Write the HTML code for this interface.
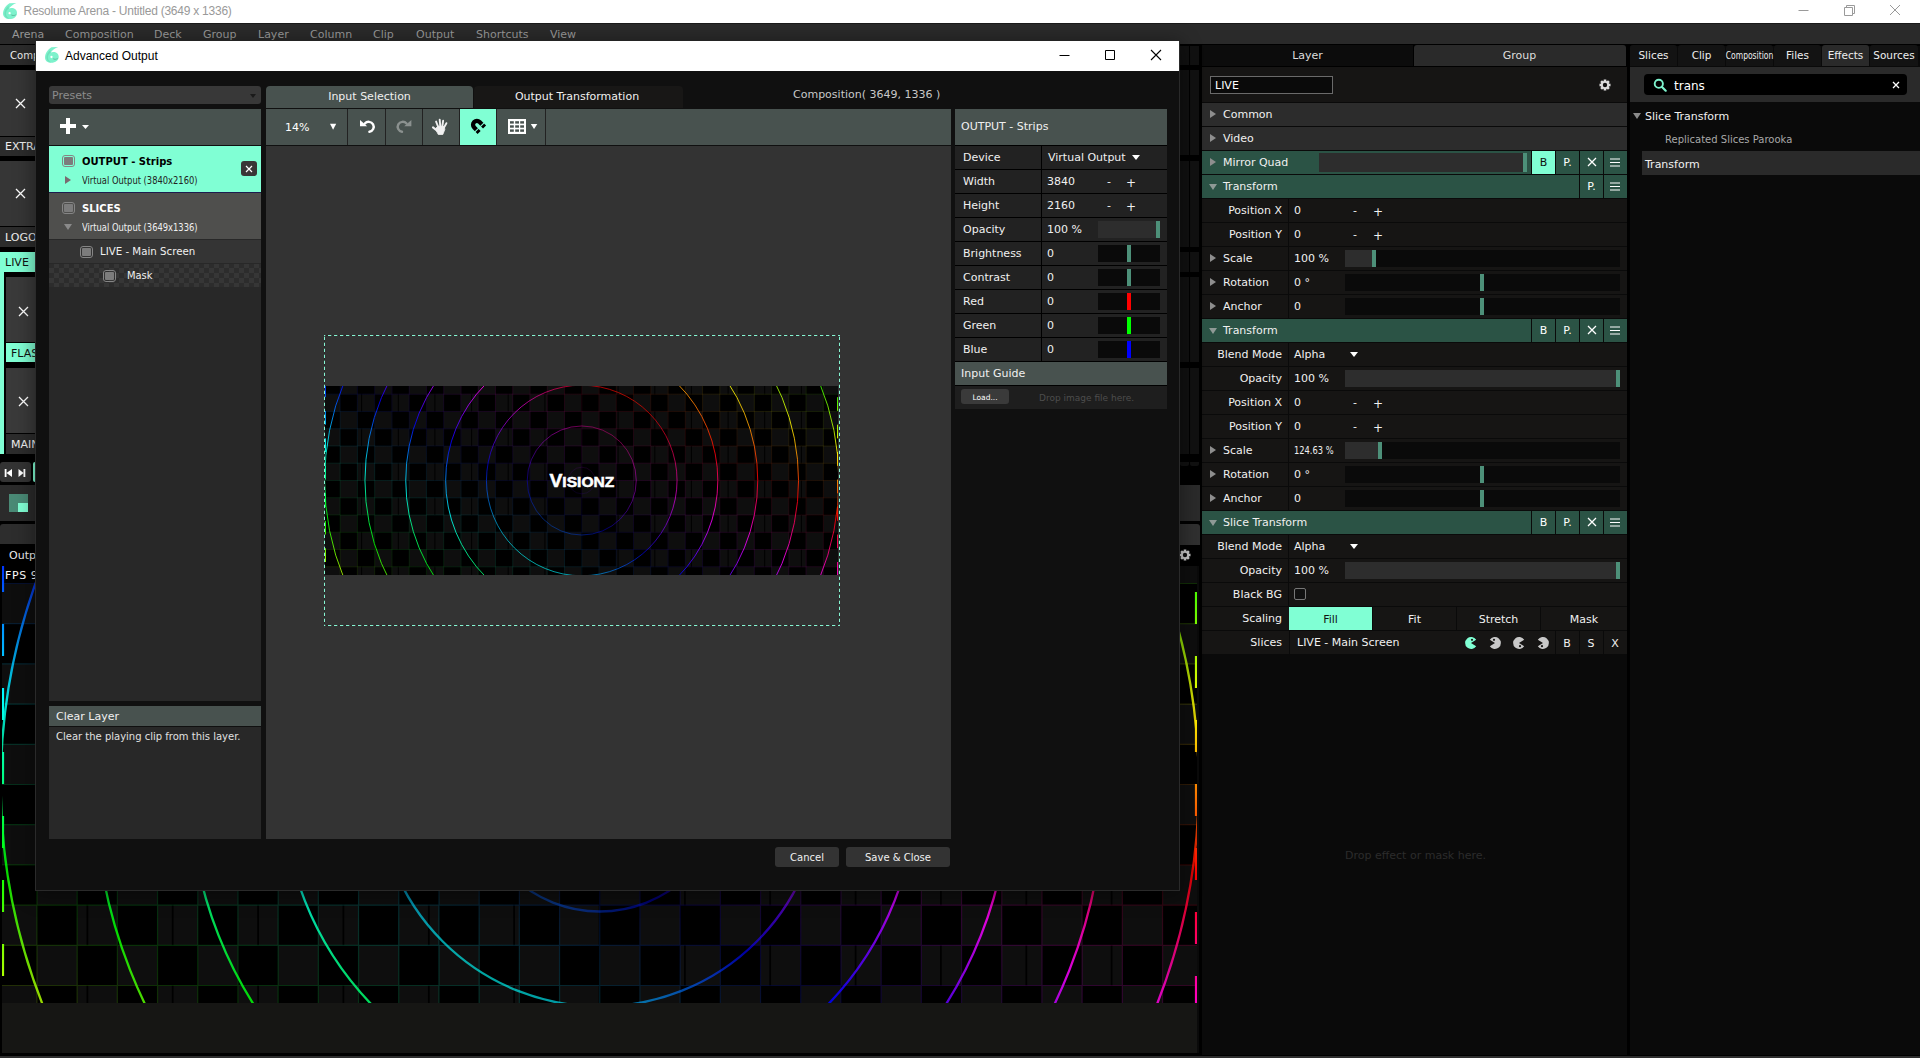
<!DOCTYPE html><html><head><meta charset="utf-8"><title>Resolume Arena - Advanced Output</title><style>
*{box-sizing:border-box;margin:0;padding:0}
html,body{width:1920px;height:1058px;overflow:hidden;background:#000}
body{position:relative;font-family:"DejaVu Sans","Liberation Sans",sans-serif;font-size:11px;color:#e8e8e8}
div,span,svg{position:absolute}
.t{white-space:nowrap;line-height:16px;height:16px}
.c{text-align:center}
.r{text-align:right}
.seg{font-family:"Liberation Sans",sans-serif}
</style></head><body>
<div style="left:0px;top:0px;width:1920px;height:23px;background:#fff;"></div>
<svg style="left:-0.20000000000000018px;top:-0.10000000000000009px" width="22" height="24" viewBox="0 0 22 24"><g transform="translate(0.20,0.10) scale(1.0)"><path d="M16.2 2.9L9.3 3.100C5.500 5.500 2.900 9.500 2.800 13.500C2.800 17 5.600 19 9.200 19C13.600 19 16.800 16.400 16.800 12.800C16.800 9.600 14.200 7.800 11 7.900C10.200 7.900 9.400 8.100 8.700 8.400C10.300 6.200 13 4.200 16.2 2.9Z" fill="#7df2cc"/><path d="M8.700 8.400C6.800 9.600 5.600 11.600 5.800 14C6 16.200 7.400 17.800 9.400 18.600C6.600 18.600 4.200 16.600 4.200 13.400C4.200 10.400 6 7.600 8.600 5.400C8.200 6.400 8.200 7.400 8.700 8.400Z" fill="#6fe0bb"/><path d="M10.800 14.300C12.600 15.100 14.800 14.900 16.300 13.900C15.800 15.300 14.500 16 13.100 16C12 16 11 15.400 10.800 14.300Z" fill="#62c4a5"/><circle cx="9.400" cy="13.100" r="1.150" fill="#fff"/></g></svg>
<span class="t seg" style="left:23.5px;top:3px;color:#999;font-size:12px;letter-spacing:-0.24px">Resolume Arena - Untitled (3649 x 1336)</span>
<svg style="left:1790px;top:-1px" width="130" height="23" viewBox="0 0 130 23"><path d="M8.5 11.5H18.5" stroke="#9a9a9a" stroke-width="1" fill="none"/><path d="M54.5 8.5H62.5V16.5H54.5Z M56.5 8.5V6.5H64.5V14.5H62.5" stroke="#9a9a9a" stroke-width="1" fill="none"/><path d="M100 6L110 16M110 6L100 16" stroke="#9a9a9a" stroke-width="1" fill="none"/></svg>
<div style="left:0px;top:23px;width:1920px;height:21px;background:#2a2a2a;border-top:1px solid #1a1a1a"></div>
<span class="t" style="left:12px;top:27px;color:#999;font-size:11px;">Arena</span>
<span class="t" style="left:65px;top:27px;color:#999;font-size:11px;">Composition</span>
<span class="t" style="left:154px;top:27px;color:#999;font-size:11px;">Deck</span>
<span class="t" style="left:203px;top:27px;color:#999;font-size:11px;">Group</span>
<span class="t" style="left:258px;top:27px;color:#999;font-size:11px;">Layer</span>
<span class="t" style="left:310px;top:27px;color:#999;font-size:11px;">Column</span>
<span class="t" style="left:373px;top:27px;color:#999;font-size:11px;">Clip</span>
<span class="t" style="left:416px;top:27px;color:#999;font-size:11px;">Output</span>
<span class="t" style="left:476px;top:27px;color:#999;font-size:11px;">Shortcuts</span>
<span class="t" style="left:550px;top:27px;color:#999;font-size:11px;">View</span>
<div style="left:0px;top:45px;width:40px;height:20px;background:#2c2c2c;"></div>
<span class="t" style="left:9.5px;top:48px;color:#eee;font-size:11px;transform:scaleX(0.92);transform-origin:0 50%">Comp</span>
<div style="left:0px;top:70px;width:40px;height:66px;background:#363636;"></div>
<svg style="left:14.5px;top:97.5px" width="11.0" height="11.0" viewBox="-5.5 -5.5 11.0 11.0"><path d="M-4.5 -4.5L4.5 4.5M4.5 -4.5L-4.5 4.5" stroke="#fff" stroke-width="1.3" fill="none"/></svg>
<div style="left:0px;top:137px;width:40px;height:19px;background:#2c2c2c;"></div>
<span class="t" style="left:5px;top:139px;color:#eee;font-size:11px;">EXTRA</span>
<div style="left:0px;top:161px;width:40px;height:65px;background:#363636;"></div>
<svg style="left:14.5px;top:187.5px" width="11.0" height="11.0" viewBox="-5.5 -5.5 11.0 11.0"><path d="M-4.5 -4.5L4.5 4.5M4.5 -4.5L-4.5 4.5" stroke="#fff" stroke-width="1.3" fill="none"/></svg>
<div style="left:0px;top:227px;width:40px;height:20px;background:#2c2c2c;"></div>
<span class="t" style="left:5px;top:230px;color:#eee;font-size:11px;">LOGO</span>
<div style="left:0px;top:252px;width:40px;height:20px;background:#80ffd4;"></div>
<span class="t" style="left:5px;top:255px;color:#111;font-size:11px;">LIVE</span>
<div style="left:0px;top:272px;width:4px;height:182px;background:#80ffd4;"></div>
<div style="left:6px;top:277px;width:34px;height:65px;background:#3a3a3a;"></div>
<svg style="left:17.5px;top:305.5px" width="11.0" height="11.0" viewBox="-5.5 -5.5 11.0 11.0"><path d="M-4.5 -4.5L4.5 4.5M4.5 -4.5L-4.5 4.5" stroke="#fff" stroke-width="1.3" fill="none"/></svg>
<div style="left:6px;top:343px;width:34px;height:19px;background:#80ffd4;"></div>
<span class="t" style="left:11px;top:346px;color:#111;font-size:11px;">FLASH</span>
<div style="left:6px;top:368px;width:34px;height:65px;background:#3a3a3a;"></div>
<svg style="left:17.5px;top:395.5px" width="11.0" height="11.0" viewBox="-5.5 -5.5 11.0 11.0"><path d="M-4.5 -4.5L4.5 4.5M4.5 -4.5L-4.5 4.5" stroke="#fff" stroke-width="1.3" fill="none"/></svg>
<div style="left:6px;top:434px;width:34px;height:20px;background:#2c2c2c;"></div>
<span class="t" style="left:11px;top:437px;color:#eee;font-size:11px;">MAIN</span>
<div style="left:0px;top:462px;width:31px;height:20px;background:#333;border-radius:3px"></div>
<svg style="left:3px;top:467px" width="26" height="12" viewBox="0 0 26 12"><path d="M1.700 2H3.500V10H1.700ZM9 2V10L3.500 6Z M20.500 2H22.300V10H20.500ZM15.500 2V10L20.500 6Z" fill="#fff"/></svg>
<div style="left:33px;top:462px;width:8px;height:20px;background:#80ffd4;border-radius:2px"></div>
<div style="left:0px;top:485px;width:40px;height:36px;background:#2b2b2b;"></div>
<div style="left:9px;top:494px;width:19px;height:18px;background:#4a8a76;"></div>
<div style="left:18px;top:503px;width:10px;height:9px;background:#80ffd4;"></div>
<div style="left:0px;top:524px;width:40px;height:20px;background:#2d2d2d;border-radius:3px 0 0 0"></div>
<div style="left:0px;top:545px;width:1200px;height:20px;background:#000;"></div>
<span class="t" style="left:9px;top:548px;color:#eee;font-size:11px;">Output</span>
<svg style="left:2px;top:566px" width="1195" height="437" viewBox="0 0 1195 437"><defs><linearGradient id="bg" gradientUnits="userSpaceOnUse" spreadMethod="repeat" x1="-83.63" y1="584.13" x2="346.46" y2="-172.52"><stop offset="0.0000" stop-color="#ff0000"/><stop offset="0.0833" stop-color="#ff8000"/><stop offset="0.1667" stop-color="#ffff00"/><stop offset="0.2500" stop-color="#80ff00"/><stop offset="0.3333" stop-color="#00ff00"/><stop offset="0.4167" stop-color="#00ff80"/><stop offset="0.5000" stop-color="#00ffff"/><stop offset="0.5833" stop-color="#0080ff"/><stop offset="0.6667" stop-color="#0000ff"/><stop offset="0.7500" stop-color="#8000ff"/><stop offset="0.8333" stop-color="#ff00ff"/><stop offset="0.9167" stop-color="#ff0080"/><stop offset="1.0000" stop-color="#ff0000"/></linearGradient><pattern id="bp" patternUnits="userSpaceOnUse" x="597.750" y="218.500" width="80.400" height="80.400"><rect width="80.400" height="80.400" fill="#000"/><rect width="40.200" height="40.200" fill="#0e0e0e"/><rect x="40.200" y="40.200" width="40.200" height="40.200" fill="#0e0e0e"/></pattern></defs><rect width="1195" height="437" fill="url(#bp)"/><path d="M85.4 0V437M170.7 0V437M256.1 0V437M341.4 0V437M426.8 0V437M512.1 0V437M597.5 0V437M682.9 0V437M768.2 0V437M853.6 0V437M938.9 0V437M1024.3 0V437M1109.6 0V437" stroke="#000" stroke-width="1.70" fill="none"/><path d="M34.95 0V437M75.15 0V437M115.35 0V437M155.55 0V437M195.75 0V437M235.95 0V437M276.15 0V437M316.35 0V437M356.55 0V437M396.75 0V437M436.95 0V437M477.15 0V437M517.35 0V437M557.55 0V437M597.75 0V437M637.95 0V437M678.15 0V437M718.35 0V437M758.55 0V437M798.75 0V437M838.95 0V437M879.15 0V437M919.35 0V437M959.55 0V437M999.75 0V437M1039.95 0V437M1080.15 0V437M1120.35 0V437M1160.55 0V437M0 17.50H1195M0 57.70H1195M0 97.90H1195M0 138.10H1195M0 178.30H1195M0 218.50H1195M0 258.70H1195M0 298.90H1195M0 339.10H1195M0 379.30H1195M0 419.50H1195" stroke="url(#bg)" stroke-width="1.20" fill="none" opacity="0.16"/><circle cx="597.75" cy="218.50" r="31.00" fill="none" stroke="url(#bg)" stroke-width="2.3" opacity="0.11"/><circle cx="597.75" cy="218.50" r="127.00" fill="none" stroke="url(#bg)" stroke-width="2.3" opacity="0.42"/><circle cx="597.75" cy="218.50" r="222.00" fill="none" stroke="url(#bg)" stroke-width="2.3" opacity="0.64"/><circle cx="597.75" cy="218.50" r="317.00" fill="none" stroke="url(#bg)" stroke-width="2.3" opacity="0.85"/><circle cx="597.75" cy="218.50" r="410.00" fill="none" stroke="url(#bg)" stroke-width="2.3" opacity="0.85"/><circle cx="597.75" cy="218.50" r="505.00" fill="none" stroke="url(#bg)" stroke-width="2.3" opacity="0.85"/><circle cx="597.75" cy="218.50" r="599.00" fill="none" stroke="url(#bg)" stroke-width="2.3" opacity="0.85"/><path d="M1.00 0.00V26.00M1.00 58.00V90.00M1.00 122.00V154.00M1.00 186.00V218.00M1.00 250.00V282.00M1.00 314.00V346.00M1.00 378.00V410.00M1194.00 26.00V58.00M1194.00 90.00V122.00M1194.00 154.00V186.00M1194.00 218.00V250.00M1194.00 282.00V314.00M1194.00 346.00V378.00M1194.00 410.00V437.00" stroke="url(#bg)" stroke-width="2.20" fill="none"/></svg>
<span class="t" style="left:5px;top:568px;color:#fff;font-size:11px;letter-spacing:0.6px">FPS 9</span>
<div style="left:2px;top:1003px;width:1195px;height:50px;background:#161614;"></div>
<div style="left:1197px;top:566px;width:2px;height:487px;background:#0a0a0a;"></div>
<div style="left:0px;top:1056px;width:1920px;height:2px;background:#2e2e2e;"></div>
<div style="left:1180px;top:46px;width:9px;height:420px;background:#111;border-radius:0 0 2px 2px"></div>
<div style="left:1190px;top:46px;width:9px;height:420px;background:#111;border-radius:0 0 2px 2px"></div>
<div style="left:1180px;top:65px;width:20px;height:5px;background:#000;"></div>
<div style="left:1180px;top:155px;width:20px;height:6px;background:#000;"></div>
<div style="left:1180px;top:247px;width:20px;height:5px;background:#000;"></div>
<div style="left:1180px;top:272px;width:20px;height:5px;background:#000;"></div>
<div style="left:1180px;top:362px;width:20px;height:6px;background:#000;"></div>
<div style="left:1180px;top:454px;width:20px;height:8px;background:#000;"></div>
<div style="left:1180px;top:466px;width:20px;height:20px;background:#000;"></div>
<div style="left:1180px;top:485px;width:20px;height:36px;background:#2b2b2b;"></div>
<div style="left:1180px;top:524px;width:20px;height:21px;background:#303030;border-radius:0 3px 0 0"></div>
<svg style="left:1178px;top:548px" width="14" height="14" viewBox="-7 -7 14 14"><rect x="-1.3" y="-5.5" width="2.6" height="11.0" transform="rotate(0)" fill="#ccc"/><rect x="-1.3" y="-5.5" width="2.6" height="11.0" transform="rotate(45)" fill="#ccc"/><rect x="-1.3" y="-5.5" width="2.6" height="11.0" transform="rotate(90)" fill="#ccc"/><rect x="-1.3" y="-5.5" width="2.6" height="11.0" transform="rotate(135)" fill="#ccc"/><circle r="4.1" fill="#ccc"/><circle r="2.2" fill="#111"/></svg>
<div style="left:1200px;top:44px;width:720px;height:1008px;background:#000;"></div>
<div style="left:1202px;top:45px;width:211px;height:21px;background:#0c0c0c;"></div>
<span class="t c" style="left:1202px;top:48px;color:#ddd;font-size:11px;width:211px">Layer</span>
<div style="left:1414px;top:45px;width:212px;height:21px;background:#2a2a2a;border-radius:3px 3px 0 0"></div>
<span class="t c" style="left:1414px;top:48px;color:#ddd;font-size:11px;width:211px">Group</span>
<div style="left:1202px;top:67px;width:425px;height:35px;background:#161514;"></div>
<div style="left:1210px;top:76px;width:123px;height:18px;background:#0a0a0a;border:1px solid #6a6a6a"></div>
<span class="t" style="left:1215px;top:78px;color:#fff;font-size:11px;">LIVE</span>
<svg style="left:1598px;top:78px" width="14" height="14" viewBox="-7 -7 14 14"><rect x="-1.3" y="-5.5" width="2.6" height="11.0" transform="rotate(0)" fill="#ddd"/><rect x="-1.3" y="-5.5" width="2.6" height="11.0" transform="rotate(45)" fill="#ddd"/><rect x="-1.3" y="-5.5" width="2.6" height="11.0" transform="rotate(90)" fill="#ddd"/><rect x="-1.3" y="-5.5" width="2.6" height="11.0" transform="rotate(135)" fill="#ddd"/><circle r="4.1" fill="#ddd"/><circle r="2.2" fill="#111"/></svg>
<div style="left:1202px;top:102px;width:425px;height:953px;background:#0a0a0a;"></div>
<div style="left:1202px;top:103px;width:425px;height:23px;background:#2c2c2c;"></div><svg style="left:1210px;top:110px" width="6" height="8" viewBox="0 0 6 8"><path d="M0 0L6 4.0L0 8Z" fill="#8e8e8e"/></svg><span class="t" style="left:1223px;top:107px;color:#f0f0f0;font-size:11px;">Common</span>
<div style="left:1202px;top:127px;width:425px;height:23px;background:#2c2c2c;"></div><svg style="left:1210px;top:134px" width="6" height="8" viewBox="0 0 6 8"><path d="M0 0L6 4.0L0 8Z" fill="#8e8e8e"/></svg><span class="t" style="left:1223px;top:131px;color:#f0f0f0;font-size:11px;">Video</span>
<div style="left:1202px;top:151px;width:329px;height:23px;background:#2b5345;"></div><svg style="left:1210px;top:158px" width="6" height="8" viewBox="0 0 6 8"><path d="M0 0L6 4.0L0 8Z" fill="#8e8e8e"/></svg><span class="t" style="left:1223px;top:155px;color:#f0f0f0;font-size:11px;">Mirror Quad</span><div style="left:1319px;top:153px;width:208px;height:19px;background:#2d2d2d;"></div><div style="left:1523px;top:153px;width:4px;height:19px;background:#4d9079;"></div><div style="left:1604px;top:151px;width:23px;height:23px;background:#2b5345;"></div><svg style="left:1610px;top:158px" width="10" height="9" viewBox="0 0 10 9"><path d="M0 1H10M0 4.5H10M0 8H10" stroke="#fff" stroke-width="1.2"/></svg><div style="left:1580px;top:151px;width:23px;height:23px;background:#2b5345;"></div><svg style="left:1586.5px;top:157px" width="10" height="10" viewBox="-5 -5 10 10"><path d="M-4 -4L4 4M4 -4L-4 4" stroke="#fff" stroke-width="1.3" fill="none"/></svg><div style="left:1556px;top:151px;width:23px;height:23px;background:#2b5345;"></div><span class="t c" style="left:1556px;top:154.5px;color:#fff;font-size:11px;width:23px">P.</span><div style="left:1532px;top:151px;width:23px;height:23px;background:#80ffd4;"></div><span class="t c" style="left:1532px;top:154.5px;color:#111;font-size:11px;width:23px">B</span>
<div style="left:1202px;top:175px;width:377px;height:23px;background:#2b5345;"></div><svg style="left:1209px;top:184px" width="8" height="6" viewBox="0 0 8 6"><path d="M0 0L8 0L4.0 6Z" fill="#8f9a96"/></svg><span class="t" style="left:1223px;top:179px;color:#f0f0f0;font-size:11px;">Transform</span><div style="left:1604px;top:175px;width:23px;height:23px;background:#2b5345;"></div><svg style="left:1610px;top:182px" width="10" height="9" viewBox="0 0 10 9"><path d="M0 1H10M0 4.5H10M0 8H10" stroke="#fff" stroke-width="1.2"/></svg><div style="left:1580px;top:175px;width:23px;height:23px;background:#2b5345;"></div><span class="t c" style="left:1580px;top:178.5px;color:#fff;font-size:11px;width:23px">P.</span>
<div style="left:1202px;top:199px;width:86px;height:23px;background:#161514;"></div><div style="left:1289px;top:199px;width:338px;height:23px;background:#161514;"></div><span class="t r" style="left:1202px;top:203px;color:#f0f0f0;font-size:11px;width:80px">Position X</span><span class="t" style="left:1294px;top:203px;color:#f0f0f0;font-size:11px;">0</span><span class="t" style="left:1353px;top:203px;color:#f0f0f0;font-size:11px;">-</span><span class="t" style="left:1373px;top:203.5px;color:#f0f0f0;font-size:12px;">+</span>
<div style="left:1202px;top:223px;width:86px;height:23px;background:#161514;"></div><div style="left:1289px;top:223px;width:338px;height:23px;background:#161514;"></div><span class="t r" style="left:1202px;top:227px;color:#f0f0f0;font-size:11px;width:80px">Position Y</span><span class="t" style="left:1294px;top:227px;color:#f0f0f0;font-size:11px;">0</span><span class="t" style="left:1353px;top:227px;color:#f0f0f0;font-size:11px;">-</span><span class="t" style="left:1373px;top:227.5px;color:#f0f0f0;font-size:12px;">+</span>
<div style="left:1202px;top:247px;width:86px;height:23px;background:#161514;"></div><div style="left:1289px;top:247px;width:338px;height:23px;background:#161514;"></div><svg style="left:1210px;top:254px" width="6" height="8" viewBox="0 0 6 8"><path d="M0 0L6 4.0L0 8Z" fill="#8e8e8e"/></svg><span class="t" style="left:1223px;top:251px;color:#f0f0f0;font-size:11px;">Scale</span><span class="t" style="left:1294px;top:251px;color:#f0f0f0;font-size:11px;">100 %</span><div style="left:1345px;top:250px;width:275px;height:17px;background:#0a0a0a;"></div><div style="left:1345px;top:250px;width:27px;height:17px;background:#2d2d2d;"></div><div style="left:1372px;top:250px;width:4px;height:17px;background:#4d9079;"></div>
<div style="left:1202px;top:271px;width:86px;height:23px;background:#161514;"></div><div style="left:1289px;top:271px;width:338px;height:23px;background:#161514;"></div><svg style="left:1210px;top:278px" width="6" height="8" viewBox="0 0 6 8"><path d="M0 0L6 4.0L0 8Z" fill="#8e8e8e"/></svg><span class="t" style="left:1223px;top:275px;color:#f0f0f0;font-size:11px;">Rotation</span><span class="t" style="left:1294px;top:275px;color:#f0f0f0;font-size:11px;">0 °</span><div style="left:1345px;top:274px;width:275px;height:17px;background:#0a0a0a;"></div><div style="left:1480px;top:274px;width:4px;height:17px;background:#4d9079;"></div>
<div style="left:1202px;top:295px;width:86px;height:23px;background:#161514;"></div><div style="left:1289px;top:295px;width:338px;height:23px;background:#161514;"></div><svg style="left:1210px;top:302px" width="6" height="8" viewBox="0 0 6 8"><path d="M0 0L6 4.0L0 8Z" fill="#8e8e8e"/></svg><span class="t" style="left:1223px;top:299px;color:#f0f0f0;font-size:11px;">Anchor</span><span class="t" style="left:1294px;top:299px;color:#f0f0f0;font-size:11px;">0</span><div style="left:1345px;top:298px;width:275px;height:17px;background:#0a0a0a;"></div><div style="left:1480px;top:298px;width:4px;height:17px;background:#4d9079;"></div>
<div style="left:1202px;top:319px;width:329px;height:23px;background:#2b5345;"></div><svg style="left:1209px;top:328px" width="8" height="6" viewBox="0 0 8 6"><path d="M0 0L8 0L4.0 6Z" fill="#8f9a96"/></svg><span class="t" style="left:1223px;top:323px;color:#f0f0f0;font-size:11px;">Transform</span><div style="left:1604px;top:319px;width:23px;height:23px;background:#2b5345;"></div><svg style="left:1610px;top:326px" width="10" height="9" viewBox="0 0 10 9"><path d="M0 1H10M0 4.5H10M0 8H10" stroke="#fff" stroke-width="1.2"/></svg><div style="left:1580px;top:319px;width:23px;height:23px;background:#2b5345;"></div><svg style="left:1586.5px;top:325px" width="10" height="10" viewBox="-5 -5 10 10"><path d="M-4 -4L4 4M4 -4L-4 4" stroke="#fff" stroke-width="1.3" fill="none"/></svg><div style="left:1556px;top:319px;width:23px;height:23px;background:#2b5345;"></div><span class="t c" style="left:1556px;top:322.5px;color:#fff;font-size:11px;width:23px">P.</span><div style="left:1532px;top:319px;width:23px;height:23px;background:#2b5345;"></div><span class="t c" style="left:1532px;top:322.5px;color:#fff;font-size:11px;width:23px">B</span>
<div style="left:1202px;top:343px;width:86px;height:23px;background:#161514;"></div><div style="left:1289px;top:343px;width:338px;height:23px;background:#161514;"></div><span class="t r" style="left:1202px;top:347px;color:#f0f0f0;font-size:11px;width:80px">Blend Mode</span><span class="t" style="left:1294px;top:347px;color:#f0f0f0;font-size:11px;">Alpha</span><svg style="left:1350px;top:352px" width="8" height="5" viewBox="0 0 8 5"><path d="M0 0L8 0L4.0 5Z" fill="#fff"/></svg>
<div style="left:1202px;top:367px;width:86px;height:23px;background:#161514;"></div><div style="left:1289px;top:367px;width:338px;height:23px;background:#161514;"></div><span class="t r" style="left:1202px;top:371px;color:#f0f0f0;font-size:11px;width:80px">Opacity</span><span class="t" style="left:1294px;top:371px;color:#f0f0f0;font-size:11px;">100 %</span><div style="left:1345px;top:370px;width:275px;height:17px;background:#0a0a0a;"></div><div style="left:1345px;top:370px;width:271px;height:17px;background:#2d2d2d;"></div><div style="left:1616px;top:370px;width:4px;height:17px;background:#4d9079;"></div>
<div style="left:1202px;top:391px;width:86px;height:23px;background:#161514;"></div><div style="left:1289px;top:391px;width:338px;height:23px;background:#161514;"></div><span class="t r" style="left:1202px;top:395px;color:#f0f0f0;font-size:11px;width:80px">Position X</span><span class="t" style="left:1294px;top:395px;color:#f0f0f0;font-size:11px;">0</span><span class="t" style="left:1353px;top:395px;color:#f0f0f0;font-size:11px;">-</span><span class="t" style="left:1373px;top:395.5px;color:#f0f0f0;font-size:12px;">+</span>
<div style="left:1202px;top:415px;width:86px;height:23px;background:#161514;"></div><div style="left:1289px;top:415px;width:338px;height:23px;background:#161514;"></div><span class="t r" style="left:1202px;top:419px;color:#f0f0f0;font-size:11px;width:80px">Position Y</span><span class="t" style="left:1294px;top:419px;color:#f0f0f0;font-size:11px;">0</span><span class="t" style="left:1353px;top:419px;color:#f0f0f0;font-size:11px;">-</span><span class="t" style="left:1373px;top:419.5px;color:#f0f0f0;font-size:12px;">+</span>
<div style="left:1202px;top:439px;width:86px;height:23px;background:#161514;"></div><div style="left:1289px;top:439px;width:338px;height:23px;background:#161514;"></div><svg style="left:1210px;top:446px" width="6" height="8" viewBox="0 0 6 8"><path d="M0 0L6 4.0L0 8Z" fill="#8e8e8e"/></svg><span class="t" style="left:1223px;top:443px;color:#f0f0f0;font-size:11px;">Scale</span><span class="t" style="left:1294px;top:443px;color:#f0f0f0;font-size:11px;transform:scaleX(0.755);transform-origin:0 50%">124.63 %</span><div style="left:1345px;top:442px;width:275px;height:17px;background:#0a0a0a;"></div><div style="left:1345px;top:442px;width:33px;height:17px;background:#2d2d2d;"></div><div style="left:1378px;top:442px;width:4px;height:17px;background:#4d9079;"></div>
<div style="left:1202px;top:463px;width:86px;height:23px;background:#161514;"></div><div style="left:1289px;top:463px;width:338px;height:23px;background:#161514;"></div><svg style="left:1210px;top:470px" width="6" height="8" viewBox="0 0 6 8"><path d="M0 0L6 4.0L0 8Z" fill="#8e8e8e"/></svg><span class="t" style="left:1223px;top:467px;color:#f0f0f0;font-size:11px;">Rotation</span><span class="t" style="left:1294px;top:467px;color:#f0f0f0;font-size:11px;">0 °</span><div style="left:1345px;top:466px;width:275px;height:17px;background:#0a0a0a;"></div><div style="left:1480px;top:466px;width:4px;height:17px;background:#4d9079;"></div>
<div style="left:1202px;top:487px;width:86px;height:23px;background:#161514;"></div><div style="left:1289px;top:487px;width:338px;height:23px;background:#161514;"></div><svg style="left:1210px;top:494px" width="6" height="8" viewBox="0 0 6 8"><path d="M0 0L6 4.0L0 8Z" fill="#8e8e8e"/></svg><span class="t" style="left:1223px;top:491px;color:#f0f0f0;font-size:11px;">Anchor</span><span class="t" style="left:1294px;top:491px;color:#f0f0f0;font-size:11px;">0</span><div style="left:1345px;top:490px;width:275px;height:17px;background:#0a0a0a;"></div><div style="left:1480px;top:490px;width:4px;height:17px;background:#4d9079;"></div>
<div style="left:1202px;top:511px;width:329px;height:23px;background:#2b5345;"></div><svg style="left:1209px;top:520px" width="8" height="6" viewBox="0 0 8 6"><path d="M0 0L8 0L4.0 6Z" fill="#8f9a96"/></svg><span class="t" style="left:1223px;top:515px;color:#f0f0f0;font-size:11px;">Slice Transform</span><div style="left:1604px;top:511px;width:23px;height:23px;background:#2b5345;"></div><svg style="left:1610px;top:518px" width="10" height="9" viewBox="0 0 10 9"><path d="M0 1H10M0 4.5H10M0 8H10" stroke="#fff" stroke-width="1.2"/></svg><div style="left:1580px;top:511px;width:23px;height:23px;background:#2b5345;"></div><svg style="left:1586.5px;top:517px" width="10" height="10" viewBox="-5 -5 10 10"><path d="M-4 -4L4 4M4 -4L-4 4" stroke="#fff" stroke-width="1.3" fill="none"/></svg><div style="left:1556px;top:511px;width:23px;height:23px;background:#2b5345;"></div><span class="t c" style="left:1556px;top:514.5px;color:#fff;font-size:11px;width:23px">P.</span><div style="left:1532px;top:511px;width:23px;height:23px;background:#2b5345;"></div><span class="t c" style="left:1532px;top:514.5px;color:#fff;font-size:11px;width:23px">B</span>
<div style="left:1202px;top:535px;width:86px;height:23px;background:#161514;"></div><div style="left:1289px;top:535px;width:338px;height:23px;background:#161514;"></div><span class="t r" style="left:1202px;top:539px;color:#f0f0f0;font-size:11px;width:80px">Blend Mode</span><span class="t" style="left:1294px;top:539px;color:#f0f0f0;font-size:11px;">Alpha</span><svg style="left:1350px;top:544px" width="8" height="5" viewBox="0 0 8 5"><path d="M0 0L8 0L4.0 5Z" fill="#fff"/></svg>
<div style="left:1202px;top:559px;width:86px;height:23px;background:#161514;"></div><div style="left:1289px;top:559px;width:338px;height:23px;background:#161514;"></div><span class="t r" style="left:1202px;top:563px;color:#f0f0f0;font-size:11px;width:80px">Opacity</span><span class="t" style="left:1294px;top:563px;color:#f0f0f0;font-size:11px;">100 %</span><div style="left:1345px;top:562px;width:275px;height:17px;background:#0a0a0a;"></div><div style="left:1345px;top:562px;width:271px;height:17px;background:#2d2d2d;"></div><div style="left:1616px;top:562px;width:4px;height:17px;background:#4d9079;"></div>
<div style="left:1202px;top:583px;width:86px;height:23px;background:#161514;"></div><div style="left:1289px;top:583px;width:338px;height:23px;background:#161514;"></div><span class="t r" style="left:1202px;top:587px;color:#f0f0f0;font-size:11px;width:80px">Black BG</span>
<div style="left:1294px;top:588px;width:12px;height:12px;background:#111;border:1px solid #777;border-radius:2px"></div>
<div style="left:1202px;top:607px;width:87px;height:23px;background:#161514;"></div>
<span class="t r" style="left:1202px;top:611px;color:#f0f0f0;font-size:11px;width:80px">Scaling</span>
<div style="left:1289px;top:607px;width:83px;height:23px;background:#80ffd4;"></div>
<span class="t c" style="left:1289px;top:611.5px;color:#111;font-size:11px;width:83px">Fill</span>
<div style="left:1373px;top:607px;width:83px;height:23px;background:#161514;"></div>
<span class="t c" style="left:1373px;top:611.5px;color:#f0f0f0;font-size:11px;width:83px">Fit</span>
<div style="left:1457px;top:607px;width:83px;height:23px;background:#161514;"></div>
<span class="t c" style="left:1457px;top:611.5px;color:#f0f0f0;font-size:11px;width:83px">Stretch</span>
<div style="left:1541px;top:607px;width:86px;height:23px;background:#161514;"></div>
<span class="t c" style="left:1541px;top:611.5px;color:#f0f0f0;font-size:11px;width:86px">Mask</span>
<div style="left:1202px;top:631px;width:87px;height:23px;background:#161514;"></div>
<span class="t r" style="left:1202px;top:635px;color:#f0f0f0;font-size:11px;width:80px">Slices</span>
<div style="left:1290px;top:631px;width:265px;height:23px;background:#161514;"></div>
<span class="t" style="left:1297px;top:635px;color:#f0f0f0;font-size:11px;">LIVE - Main Screen</span>
<svg style="left:1464px;top:636px" width="14" height="14" viewBox="-7 -7 14 14"><g transform="scale(1,1)"><path d="M0 0L5.2 -3.2A6 6 0 1 0 5.2 3.2Z" fill="#80ffd4"/><circle cx="1" cy="-3.2" r="1.1" fill="#161514"/></g></svg>
<svg style="left:1488px;top:636px" width="14" height="14" viewBox="-7 -7 14 14"><g transform="scale(-1,1)"><path d="M0 0L5.2 -3.2A6 6 0 1 0 5.2 3.2Z" fill="#c8c8c8"/><circle cx="1" cy="-3.2" r="1.1" fill="#161514"/></g></svg>
<svg style="left:1512px;top:636px" width="14" height="14" viewBox="-7 -7 14 14"><g transform="scale(1,-1)"><path d="M0 0L5.2 -3.2A6 6 0 1 0 5.2 3.2Z" fill="#c8c8c8"/><circle cx="1" cy="-3.2" r="1.1" fill="#161514"/></g></svg>
<svg style="left:1536px;top:636px" width="14" height="14" viewBox="-7 -7 14 14"><g transform="scale(-1,-1)"><path d="M0 0L5.2 -3.2A6 6 0 1 0 5.2 3.2Z" fill="#c8c8c8"/><circle cx="1" cy="-3.2" r="1.1" fill="#161514"/></g></svg>
<div style="left:1556px;top:631px;width:23px;height:23px;background:#161514;"></div>
<span class="t c" style="left:1556px;top:636px;color:#f0f0f0;font-size:11px;width:22px">B</span>
<div style="left:1580px;top:631px;width:23px;height:23px;background:#161514;"></div>
<span class="t c" style="left:1580px;top:636px;color:#f0f0f0;font-size:11px;width:22px">S</span>
<div style="left:1604px;top:631px;width:23px;height:23px;background:#161514;"></div>
<span class="t c" style="left:1604px;top:636px;color:#f0f0f0;font-size:11px;width:22px">X</span>
<span class="t" style="left:1345px;top:848px;color:#2c2c2c;font-size:11px;">Drop effect or mask here.</span>
<div style="left:1630px;top:46px;width:290px;height:1009px;background:#0a0a0a;"></div>
<div style="left:1630px;top:45px;width:47px;height:21px;background:#131313;border-radius:3px 3px 0 0"></div>
<div style="left:1678px;top:45px;width:47px;height:21px;background:#131313;border-radius:3px 3px 0 0"></div>
<div style="left:1726px;top:45px;width:47px;height:21px;background:#131313;border-radius:3px 3px 0 0"></div>
<div style="left:1774px;top:45px;width:47px;height:21px;background:#131313;border-radius:3px 3px 0 0"></div>
<div style="left:1822px;top:45px;width:47px;height:21px;background:#2a2a2a;border-radius:3px 3px 0 0"></div>
<div style="left:1870px;top:45px;width:48px;height:21px;background:#131313;border-radius:3px 3px 0 0"></div>
<span class="t c" style="left:1610px;top:48px;color:#eee;font-size:11px;width:87px;transform:scaleX(0.95);">Slices</span>
<span class="t c" style="left:1658px;top:48px;color:#eee;font-size:11px;width:87px;transform:scaleX(0.95);">Clip</span>
<span class="t c" style="left:1706px;top:48px;color:#eee;font-size:11px;width:87px;transform:scaleX(0.69);">Composition</span>
<span class="t c" style="left:1754px;top:48px;color:#eee;font-size:11px;width:87px;transform:scaleX(0.95);">Files</span>
<span class="t c" style="left:1802px;top:48px;color:#eee;font-size:11px;width:87px;transform:scaleX(0.95);">Effects</span>
<span class="t c" style="left:1850px;top:48px;color:#eee;font-size:11px;width:88px;transform:scaleX(0.95);">Sources</span>
<div style="left:1630px;top:67px;width:290px;height:35px;background:#2a2a2a;"></div>
<div style="left:1644px;top:74px;width:263px;height:21px;background:#000;border-radius:4px"></div>
<svg style="left:1653px;top:78px" width="14" height="14" viewBox="0 0 14 14"><circle cx="5.800" cy="5.800" r="4.100" fill="none" stroke="#7df2cc" stroke-width="1.900"/><path d="M9 9L12.700 12.700" stroke="#7df2cc" stroke-width="2.200" stroke-linecap="round"/></svg>
<span class="t" style="left:1674px;top:78px;color:#fff;font-size:12px;">trans</span>
<svg style="left:1892px;top:81px" width="8" height="8" viewBox="-4 -4 8 8"><path d="M-3 -3L3 3M3 -3L-3 3" stroke="#fff" stroke-width="1.3" fill="none"/></svg>
<svg style="left:1633px;top:113px" width="8" height="6" viewBox="0 0 8 6"><path d="M0 0L8 0L4.0 6Z" fill="#8a8a8a"/></svg>
<span class="t" style="left:1645px;top:109px;color:#f0f0f0;font-size:11px;">Slice Transform</span>
<span class="t" style="left:1665px;top:132px;color:#a8a8a8;font-size:10px;">Replicated Slices Parooka</span>
<div style="left:1642px;top:151px;width:278px;height:24px;background:#2a2a2a;"></div>
<span class="t" style="left:1645px;top:157px;color:#f0f0f0;font-size:11px;">Transform</span>
<div style="left:35px;top:41px;width:1145px;height:850px;background:#101010;box-shadow:0 3px 18px 2px rgba(0,0,0,0.38);border:1px solid #2a2a2a;border-top:none"></div>
<div style="left:36px;top:41px;width:1143px;height:30px;background:#fff;"></div>
<svg style="left:42.2px;top:44.2px" width="22" height="24" viewBox="0 0 22 24"><g transform="translate(0.26,0.16) scale(0.98)"><path d="M16.2 2.9L9.3 3.100C5.500 5.500 2.900 9.500 2.800 13.500C2.800 17 5.600 19 9.200 19C13.600 19 16.800 16.400 16.800 12.800C16.800 9.600 14.200 7.800 11 7.900C10.200 7.900 9.400 8.100 8.700 8.400C10.300 6.200 13 4.200 16.2 2.9Z" fill="#7df2cc"/><path d="M8.700 8.400C6.800 9.600 5.600 11.600 5.800 14C6 16.200 7.400 17.800 9.400 18.600C6.600 18.600 4.200 16.600 4.200 13.400C4.200 10.400 6 7.600 8.600 5.400C8.200 6.400 8.200 7.400 8.700 8.400Z" fill="#6fe0bb"/><path d="M10.800 14.300C12.600 15.100 14.800 14.900 16.300 13.900C15.800 15.300 14.500 16 13.100 16C12 16 11 15.400 10.800 14.300Z" fill="#62c4a5"/><circle cx="9.400" cy="13.100" r="1.150" fill="#fff"/></g></svg>
<span class="t seg" style="left:65px;top:48px;color:#000;font-size:12px">Advanced Output</span>
<svg style="left:1050px;top:41px" width="130" height="30" viewBox="0 0 130 30"><path d="M9.5 14.5H19.5" stroke="#000" stroke-width="1" fill="none"/><path d="M55.5 9.5H64.5V18.5H55.5Z" stroke="#000" stroke-width="1" fill="none"/><path d="M101 9L111 19M111 9L101 19" stroke="#000" stroke-width="1.1" fill="none"/></svg>
<div style="left:49px;top:86px;width:212px;height:18px;background:#383838;border-radius:3px"></div>
<span class="t" style="left:52px;top:88px;color:#8c8c8c;font-size:11px;">Presets</span>
<svg style="left:250px;top:94px" width="6" height="4" viewBox="0 0 6 4"><path d="M0 0L6 0L3.0 4Z" fill="#1a1a1a"/></svg>
<div style="left:49px;top:109px;width:212px;height:36px;background:#48524f;"></div>
<svg style="left:60px;top:118px" width="16" height="16" viewBox="0 0 16 16"><path d="M6 0H10V6H16V10H10V16H6V10H0V6H6Z" fill="#fff"/></svg>
<svg style="left:82px;top:125px" width="7" height="4" viewBox="0 0 7 4"><path d="M0 0L7 0L3.5 4Z" fill="#fff"/></svg>
<div style="left:49px;top:146px;width:212px;height:555px;background:#282828;"></div>
<div style="left:49px;top:146px;width:212px;height:47px;background:#80ffd4;border-bottom:1px solid #1d1d4f"></div>
<div style="left:62px;top:155px;width:13px;height:12px;background:#7c7c7c;border:1px solid #858585;border-radius:3px;padding:1px;background-clip:content-box"></div>
<span class="t" style="left:82px;top:154px;color:#000;font-size:10px;font-weight:bold">OUTPUT - Strips</span>
<svg style="left:65px;top:176px" width="6" height="8" viewBox="0 0 6 8"><path d="M0 0L6 4.0L0 8Z" fill="#7a6a70"/></svg>
<span class="t" style="left:82px;top:173px;color:#222;font-size:10px;transform:scaleX(0.835);transform-origin:0 50%">Virtual Output (3840x2160)</span>
<div style="left:241px;top:161px;width:16px;height:15px;background:#393636;border-radius:3px"></div>
<svg style="left:245px;top:164.5px" width="8" height="8" viewBox="-4 -4 8 8"><path d="M-3 -3L3 3M3 -3L-3 3" stroke="#fff" stroke-width="1.2" fill="none"/></svg>
<div style="left:49px;top:193px;width:212px;height:46px;background:#4f4f4d;"></div>
<div style="left:62px;top:202px;width:13px;height:12px;background:#7c7c7c;border:1px solid #858585;border-radius:3px;padding:1px;background-clip:content-box"></div>
<span class="t" style="left:82px;top:201px;color:#fff;font-size:10px;font-weight:bold">SLICES</span>
<svg style="left:64px;top:224px" width="8" height="6" viewBox="0 0 8 6"><path d="M0 0L8 0L4.0 6Z" fill="#8a8a8a"/></svg>
<span class="t" style="left:82px;top:220px;color:#f0f0f0;font-size:10px;transform:scaleX(0.835);transform-origin:0 50%">Virtual Output (3649x1336)</span>
<div style="left:49px;top:240px;width:212px;height:23px;background:#343434;"></div>
<div style="left:80px;top:246px;width:13px;height:12px;background:#7c7c7c;border:1px solid #858585;border-radius:3px;padding:1px;background-clip:content-box"></div>
<span class="t" style="left:100px;top:244px;color:#f0f0f0;font-size:11px;transform:scaleX(0.93);transform-origin:0 50%">LIVE - Main Screen</span>
<div style="left:49px;top:264px;width:212px;height:23px;background:#2e2e2e;background-image:conic-gradient(#363636 25%,#2c2c2c 0 50%,#363636 0 75%,#2c2c2c 0);background-size:10px 10px;background-position:0 -1px"></div>
<div style="left:103px;top:270px;width:13px;height:12px;background:#7c7c7c;border:1px solid #858585;border-radius:3px;padding:1px;background-clip:content-box"></div>
<span class="t" style="left:127px;top:268px;color:#f0f0f0;font-size:11px;transform:scaleX(0.9);transform-origin:0 50%">Mask</span>
<div style="left:49px;top:706px;width:212px;height:20px;background:#48524f;"></div>
<span class="t" style="left:56px;top:709px;color:#f0f0f0;font-size:11px;">Clear Layer</span>
<div style="left:49px;top:727px;width:212px;height:112px;background:#282828;"></div>
<span class="t" style="left:56px;top:729px;color:#e0e0e0;font-size:10px;">Clear the playing clip from this layer.</span>
<div style="left:266px;top:86px;width:207px;height:22px;background:#48524f;border-radius:4px 4px 0 0"></div>
<span class="t c" style="left:266px;top:89px;color:#f0f0f0;font-size:11px;width:207px">Input Selection</span>
<div style="left:474px;top:86px;width:209px;height:22px;background:#181716;border-radius:4px 4px 0 0"></div>
<span class="t c" style="left:474px;top:89px;color:#f0f0f0;font-size:11px;width:206px">Output Transformation</span>
<span class="t" style="left:793px;top:87px;color:#c8c8c8;font-size:11px;">Composition( 3649, 1336 )</span>
<div style="left:266px;top:109px;width:685px;height:36px;background:#48524f;"></div>
<div style="left:347px;top:109px;width:1px;height:36px;background:#222;"></div>
<div style="left:385px;top:109px;width:1px;height:36px;background:#222;"></div>
<div style="left:422px;top:109px;width:1px;height:36px;background:#222;"></div>
<div style="left:459px;top:109px;width:1px;height:36px;background:#222;"></div>
<div style="left:496px;top:109px;width:1px;height:36px;background:#222;"></div>
<div style="left:545px;top:109px;width:1px;height:36px;background:#222;"></div>
<div style="left:460px;top:109px;width:36px;height:36px;background:#80ffd4;"></div>
<span class="t" style="left:285px;top:120px;color:#fff;font-size:11px;">14%</span>
<svg style="left:266px;top:109px" width="685" height="36" viewBox="266 109 685 36"><path d="M364.87 123.59A5 5 0 1 1 369.40 131.75" stroke="#fff" stroke-width="2.4" stroke-linecap="round" fill="none"/><path d="M360.00 120L360.00 126.3L367.20 126.3Z" fill="#fff"/><path d="M406.53 123.59A5 5 0 1 0 402.00 131.75" stroke="#8b918f" stroke-width="2.4" stroke-linecap="round" fill="none"/><path d="M411.40 120L411.40 126.3L404.20 126.3Z" fill="#8b918f"/><g transform="translate(432,118)" fill="#f0f0f0" stroke="#f0f0f0" stroke-linecap="round"><path d="M3.800 10.200L6 8.200L12.300 8.600L12.800 11.500L10.800 16.500H6.300L4.600 13.200Z" stroke-width="0.8"/><path d="M5.200 12.800L1 9.400" stroke-width="2.100" fill="none"/><path d="M6.200 9L4.100 3.600M8.300 8.500L7.700 1.600M10.300 8.600L11.100 2.800M12 9.600L14.400 5.200" stroke-width="1.900" fill="none"/></g><g transform="translate(476.9,124.800) rotate(-45)"><path d="M-6 0A6 6 0 0 1 6 0V7H1.700V0A1.700 1.700 0 0 0 -1.700 0V7H-6Z" fill="#000"/><rect x="-6.500" y="3.100" width="13" height="1.100" fill="#80ffd4"/></g><rect x="508" y="119" width="18" height="15" fill="#fff"/><rect x="510" y="121.2" width="3.800" height="2.400" fill="#48524f"/><rect x="510" y="125.3" width="3.800" height="2.400" fill="#48524f"/><rect x="510" y="129.4" width="3.800" height="2.400" fill="#48524f"/><rect x="515.2" y="121.2" width="3.800" height="2.400" fill="#48524f"/><rect x="515.2" y="125.3" width="3.800" height="2.400" fill="#48524f"/><rect x="515.2" y="129.4" width="3.800" height="2.400" fill="#48524f"/><rect x="520.2" y="121.2" width="3.800" height="2.400" fill="#48524f"/><rect x="520.2" y="125.3" width="3.800" height="2.400" fill="#48524f"/><rect x="520.2" y="129.4" width="3.800" height="2.400" fill="#48524f"/><path d="M530.800 124H537.300L534.050 129Z" fill="#fff"/><path d="M330 123.800H336.200L333.100 129.800Z" fill="#fff"/></svg>
<div style="left:266px;top:146px;width:685px;height:693px;background:#333;"></div>
<svg style="left:320px;top:331px" width="524" height="299" viewBox="320 331 524 299"><rect x="324.5" y="335.5" width="515" height="290" fill="none" stroke="#292929" stroke-width="1"/><path d="M324 335.5H840M324 625.5H840" stroke="#86f5d2" stroke-width="1" stroke-dasharray="3.300 2.700" stroke-dashoffset="-4" fill="none"/><path d="M324.5 335V626M839.5 335V626" stroke="#86f5d2" stroke-width="1" stroke-dasharray="3.300 2.700" stroke-dashoffset="-1.700" fill="none"/></svg>
<svg style="left:325px;top:386px" width="513" height="189" viewBox="0 0 513 189"><defs><linearGradient id="sg" gradientUnits="userSpaceOnUse" spreadMethod="repeat" x1="-35.90" y1="252.16" x2="148.73" y2="-72.66"><stop offset="0.0000" stop-color="#ff0000"/><stop offset="0.0833" stop-color="#ff8000"/><stop offset="0.1667" stop-color="#ffff00"/><stop offset="0.2500" stop-color="#80ff00"/><stop offset="0.3333" stop-color="#00ff00"/><stop offset="0.4167" stop-color="#00ff80"/><stop offset="0.5000" stop-color="#00ffff"/><stop offset="0.5833" stop-color="#0080ff"/><stop offset="0.6667" stop-color="#0000ff"/><stop offset="0.7500" stop-color="#8000ff"/><stop offset="0.8333" stop-color="#ff00ff"/><stop offset="0.9167" stop-color="#ff0080"/><stop offset="1.0000" stop-color="#ff0000"/></linearGradient><pattern id="sp" patternUnits="userSpaceOnUse" x="256.750" y="94.500" width="34.515" height="34.515"><rect width="34.515" height="34.515" fill="#000"/><rect width="17.257" height="17.257" fill="#0e0e0e"/><rect x="17.257" y="17.257" width="17.257" height="17.257" fill="#0e0e0e"/></pattern></defs><rect width="513" height="189" fill="url(#sp)"/><path d="M36.6 0V189M73.3 0V189M109.9 0V189M146.6 0V189M183.2 0V189M219.9 0V189M256.5 0V189M293.1 0V189M329.8 0V189M366.4 0V189M403.1 0V189M439.7 0V189M476.4 0V189" stroke="#000" stroke-width="1.00" fill="none"/><path d="M15.15 0V189M32.40 0V189M49.66 0V189M66.92 0V189M84.18 0V189M101.43 0V189M118.69 0V189M135.95 0V189M153.21 0V189M170.46 0V189M187.72 0V189M204.98 0V189M222.24 0V189M239.49 0V189M256.75 0V189M274.01 0V189M291.26 0V189M308.52 0V189M325.78 0V189M343.04 0V189M360.29 0V189M377.55 0V189M394.81 0V189M412.07 0V189M429.32 0V189M446.58 0V189M463.84 0V189M481.10 0V189M498.35 0V189M0 8.21H513M0 25.47H513M0 42.73H513M0 59.99H513M0 77.24H513M0 94.50H513M0 111.76H513M0 129.01H513M0 146.27H513M0 163.53H513M0 180.79H513" stroke="url(#sg)" stroke-width="1.00" fill="none" opacity="0.09"/><circle cx="256.75" cy="94.50" r="13.31" fill="none" stroke="url(#sg)" stroke-width="1.0" opacity="0.11"/><circle cx="256.75" cy="94.50" r="54.52" fill="none" stroke="url(#sg)" stroke-width="1.0" opacity="0.42"/><circle cx="256.75" cy="94.50" r="95.30" fill="none" stroke="url(#sg)" stroke-width="1.0" opacity="0.64"/><circle cx="256.75" cy="94.50" r="136.08" fill="none" stroke="url(#sg)" stroke-width="1.0" opacity="0.85"/><circle cx="256.75" cy="94.50" r="176.01" fill="none" stroke="url(#sg)" stroke-width="1.0" opacity="0.85"/><circle cx="256.75" cy="94.50" r="216.79" fill="none" stroke="url(#sg)" stroke-width="1.0" opacity="0.85"/><circle cx="256.75" cy="94.50" r="257.14" fill="none" stroke="url(#sg)" stroke-width="1.0" opacity="0.85"/><path d="M0.43 0.00V11.16M0.43 24.90V38.64M0.43 52.37V66.11M0.43 79.85V93.58M0.43 107.32V121.06M0.43 134.80V148.53M0.43 162.27V176.01M512.57 11.16V24.90M512.57 38.64V52.37M512.57 66.11V79.85M512.57 93.58V107.32M512.57 121.06V134.80M512.57 148.53V162.27M512.57 176.01V189.00" stroke="url(#sg)" stroke-width="1.00" fill="none"/><text x="224.4" y="100.5" font-family="Liberation Sans,DejaVu Sans,sans-serif" font-weight="bold" font-size="14.8" fill="#fff" textLength="65" lengthAdjust="spacingAndGlyphs" stroke="#fff" stroke-width="0.5"><tspan font-size="18.4">V</tspan>ISIONZ</text></svg>
<div style="left:955px;top:145px;width:212px;height:264px;background:#000;"></div>
<div style="left:955px;top:109px;width:212px;height:36px;background:#48524f;"></div>
<span class="t" style="left:961px;top:119px;color:#f0f0f0;font-size:11px;">OUTPUT - Strips</span>
<div style="left:955px;top:146px;width:86px;height:23px;background:#222;"></div>
<div style="left:1042px;top:146px;width:125px;height:23px;background:#222;"></div>
<span class="t" style="left:963px;top:150px;color:#f0f0f0;font-size:11px;">Device</span>
<span class="t" style="left:1048px;top:150px;color:#f0f0f0;font-size:11px;">Virtual Output</span>
<svg style="left:1132px;top:155px" width="8" height="5" viewBox="0 0 8 5"><path d="M0 0L8 0L4.0 5Z" fill="#fff"/></svg>
<div style="left:955px;top:170px;width:86px;height:23px;background:#222;"></div>
<div style="left:1042px;top:170px;width:125px;height:23px;background:#222;"></div>
<span class="t" style="left:963px;top:174px;color:#f0f0f0;font-size:11px;">Width</span>
<span class="t" style="left:1047px;top:174px;color:#f0f0f0;font-size:11px;">3840</span>
<span class="t" style="left:1107px;top:174px;color:#f0f0f0;font-size:11px;">-</span>
<span class="t" style="left:1126px;top:174.5px;color:#f0f0f0;font-size:12px;">+</span>
<div style="left:955px;top:194px;width:86px;height:23px;background:#222;"></div>
<div style="left:1042px;top:194px;width:125px;height:23px;background:#222;"></div>
<span class="t" style="left:963px;top:198px;color:#f0f0f0;font-size:11px;">Height</span>
<span class="t" style="left:1047px;top:198px;color:#f0f0f0;font-size:11px;">2160</span>
<span class="t" style="left:1107px;top:198px;color:#f0f0f0;font-size:11px;">-</span>
<span class="t" style="left:1126px;top:198.5px;color:#f0f0f0;font-size:12px;">+</span>
<div style="left:955px;top:218px;width:86px;height:23px;background:#222;"></div>
<div style="left:1042px;top:218px;width:125px;height:23px;background:#222;"></div>
<span class="t" style="left:963px;top:222px;color:#f0f0f0;font-size:11px;">Opacity</span>
<span class="t" style="left:1047px;top:222px;color:#f0f0f0;font-size:11px;">100 %</span>
<div style="left:1098px;top:221px;width:62px;height:17px;background:#2d2d2d;"></div>
<div style="left:1156px;top:221px;width:4px;height:17px;background:#4d9079;"></div>
<div style="left:955px;top:242px;width:86px;height:23px;background:#222;"></div>
<div style="left:1042px;top:242px;width:125px;height:23px;background:#222;"></div>
<span class="t" style="left:963px;top:246px;color:#f0f0f0;font-size:11px;">Brightness</span>
<span class="t" style="left:1047px;top:246px;color:#f0f0f0;font-size:11px;">0</span>
<div style="left:1098px;top:245px;width:62px;height:17px;background:#0a0a0a;"></div>
<div style="left:1127px;top:245px;width:4px;height:17px;background:#4d9079;"></div>
<div style="left:955px;top:266px;width:86px;height:23px;background:#222;"></div>
<div style="left:1042px;top:266px;width:125px;height:23px;background:#222;"></div>
<span class="t" style="left:963px;top:270px;color:#f0f0f0;font-size:11px;">Contrast</span>
<span class="t" style="left:1047px;top:270px;color:#f0f0f0;font-size:11px;">0</span>
<div style="left:1098px;top:269px;width:62px;height:17px;background:#0a0a0a;"></div>
<div style="left:1127px;top:269px;width:4px;height:17px;background:#4d9079;"></div>
<div style="left:955px;top:290px;width:86px;height:23px;background:#222;"></div>
<div style="left:1042px;top:290px;width:125px;height:23px;background:#222;"></div>
<span class="t" style="left:963px;top:294px;color:#f0f0f0;font-size:11px;">Red</span>
<span class="t" style="left:1047px;top:294px;color:#f0f0f0;font-size:11px;">0</span>
<div style="left:1098px;top:293px;width:62px;height:17px;background:#0a0a0a;"></div>
<div style="left:1127px;top:293px;width:4px;height:17px;background:#ff0000;"></div>
<div style="left:955px;top:314px;width:86px;height:23px;background:#222;"></div>
<div style="left:1042px;top:314px;width:125px;height:23px;background:#222;"></div>
<span class="t" style="left:963px;top:318px;color:#f0f0f0;font-size:11px;">Green</span>
<span class="t" style="left:1047px;top:318px;color:#f0f0f0;font-size:11px;">0</span>
<div style="left:1098px;top:317px;width:62px;height:17px;background:#0a0a0a;"></div>
<div style="left:1127px;top:317px;width:4px;height:17px;background:#00ff00;"></div>
<div style="left:955px;top:338px;width:86px;height:23px;background:#222;"></div>
<div style="left:1042px;top:338px;width:125px;height:23px;background:#222;"></div>
<span class="t" style="left:963px;top:342px;color:#f0f0f0;font-size:11px;">Blue</span>
<span class="t" style="left:1047px;top:342px;color:#f0f0f0;font-size:11px;">0</span>
<div style="left:1098px;top:341px;width:62px;height:17px;background:#0a0a0a;"></div>
<div style="left:1127px;top:341px;width:4px;height:17px;background:#0000ff;"></div>
<div style="left:955px;top:362px;width:212px;height:23px;background:#48524f;"></div>
<span class="t" style="left:961px;top:366px;color:#f0f0f0;font-size:11px;">Input Guide</span>
<div style="left:955px;top:386px;width:212px;height:23px;background:#1e1e1e;"></div>
<div style="left:961px;top:389px;width:48px;height:15px;background:#3a3a3a;border-radius:3px"></div>
<span class="t c" style="left:961px;top:389.5px;color:#fff;font-size:7.5px;width:48px">Load...</span>
<span class="t" style="left:1039px;top:390px;color:#4d4d4d;font-size:9px;">Drop image file here.</span>
<div style="left:775px;top:847px;width:64px;height:20px;background:#333;border-radius:3px"></div>
<span class="t c" style="left:775px;top:850px;color:#f0f0f0;font-size:10px;width:64px">Cancel</span>
<div style="left:846px;top:847px;width:104px;height:20px;background:#333;border-radius:3px"></div>
<span class="t c" style="left:846px;top:850px;color:#f0f0f0;font-size:10px;width:104px">Save &amp; Close</span>
</body></html>
